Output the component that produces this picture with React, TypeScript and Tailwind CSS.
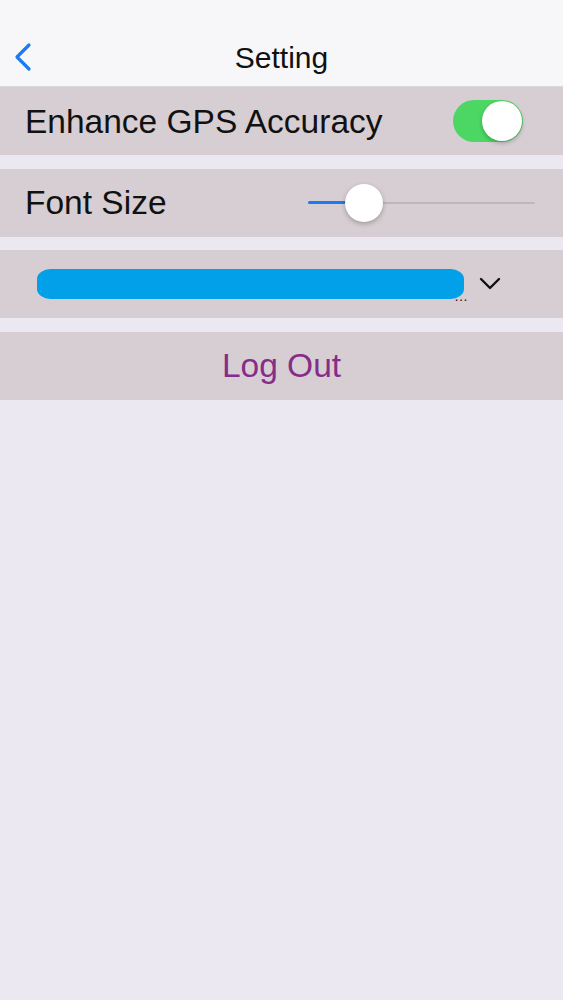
import React from 'react';

const font = { fontFamily: '"Liberation Sans", Arial, sans-serif' };

function Row({ children, className = '' }: { children: React.ReactNode; className?: string }) {
  return <div className={`h-[68px] bg-[#d6ced2] flex items-center ${className}`}>{children}</div>;
}

export default function App() {
  return (
    <div className="w-[563px] h-[1000px] bg-[#ebe8f1] flex flex-col" style={font}>
      {/* nav bar */}
      <div className="h-[87px] shrink-0 bg-[#f7f7f9] relative flex items-end justify-center pb-[13px] border-b border-[#d9d6dc]">
        <svg className="absolute left-[12px] top-[42px]" width="22" height="30" viewBox="0 0 22 30">
          <path d="M17 3 L5 15 L17 27" fill="none" stroke="#1a7cf0" strokeWidth="3.2" strokeLinecap="round" strokeLinejoin="round" />
        </svg>
        <span className="text-[30px] text-[#111] leading-none">Setting</span>
      </div>

      <div className="flex flex-col gap-[13.5px]">
        <Row className="justify-between pl-[25px] pr-[40px]">
          <span className="text-[33.5px] text-[#111] pt-[2px]">Enhance GPS Accuracy</span>
          <div className="w-[70px] h-[42px] rounded-full bg-[#4cd764] flex items-center justify-end pr-[1px]">
            <div className="w-[40px] h-[40px] rounded-full bg-white shadow-[0_2px_4px_rgba(0,0,0,0.25)]" />
          </div>
        </Row>

        <Row className="pl-[25px] pr-[28px]">
          <span className="text-[33.5px] text-[#111] flex-1 pt-[2px]">Font Size</span>
          <div className="relative w-[227px] h-[38px] flex items-center">
            <div className="w-full h-[2px] bg-[#bdb6ba] rounded-full" />
            <div className="absolute left-0 w-[50px] h-[3px] bg-[#1a7cf0] rounded-full" />
            <div className="absolute left-[37px] w-[38px] h-[38px] rounded-full bg-white shadow-[0_2px_5px_rgba(0,0,0,0.25)]" />
          </div>
        </Row>

        <Row className="pl-[37px]">
          <div className="w-[427px] h-[30px] bg-[#02a0e8] rounded-[14px/10px] relative">
            <span className="absolute -right-[4px] bottom-[-4px] text-[14px] leading-none text-[#111]">…</span>
          </div>
          <svg className="ml-[15px]" width="22" height="14" viewBox="0 0 22 14">
            <path d="M2 2 L11 11 L20 2" fill="none" stroke="#111" strokeWidth="2.4" strokeLinecap="round" strokeLinejoin="round" />
          </svg>
        </Row>

        <Row className="justify-center">
          <span className="text-[33.5px] text-[#862c8a] pt-[2px]">Log Out</span>
        </Row>
      </div>
    </div>
  );
}
